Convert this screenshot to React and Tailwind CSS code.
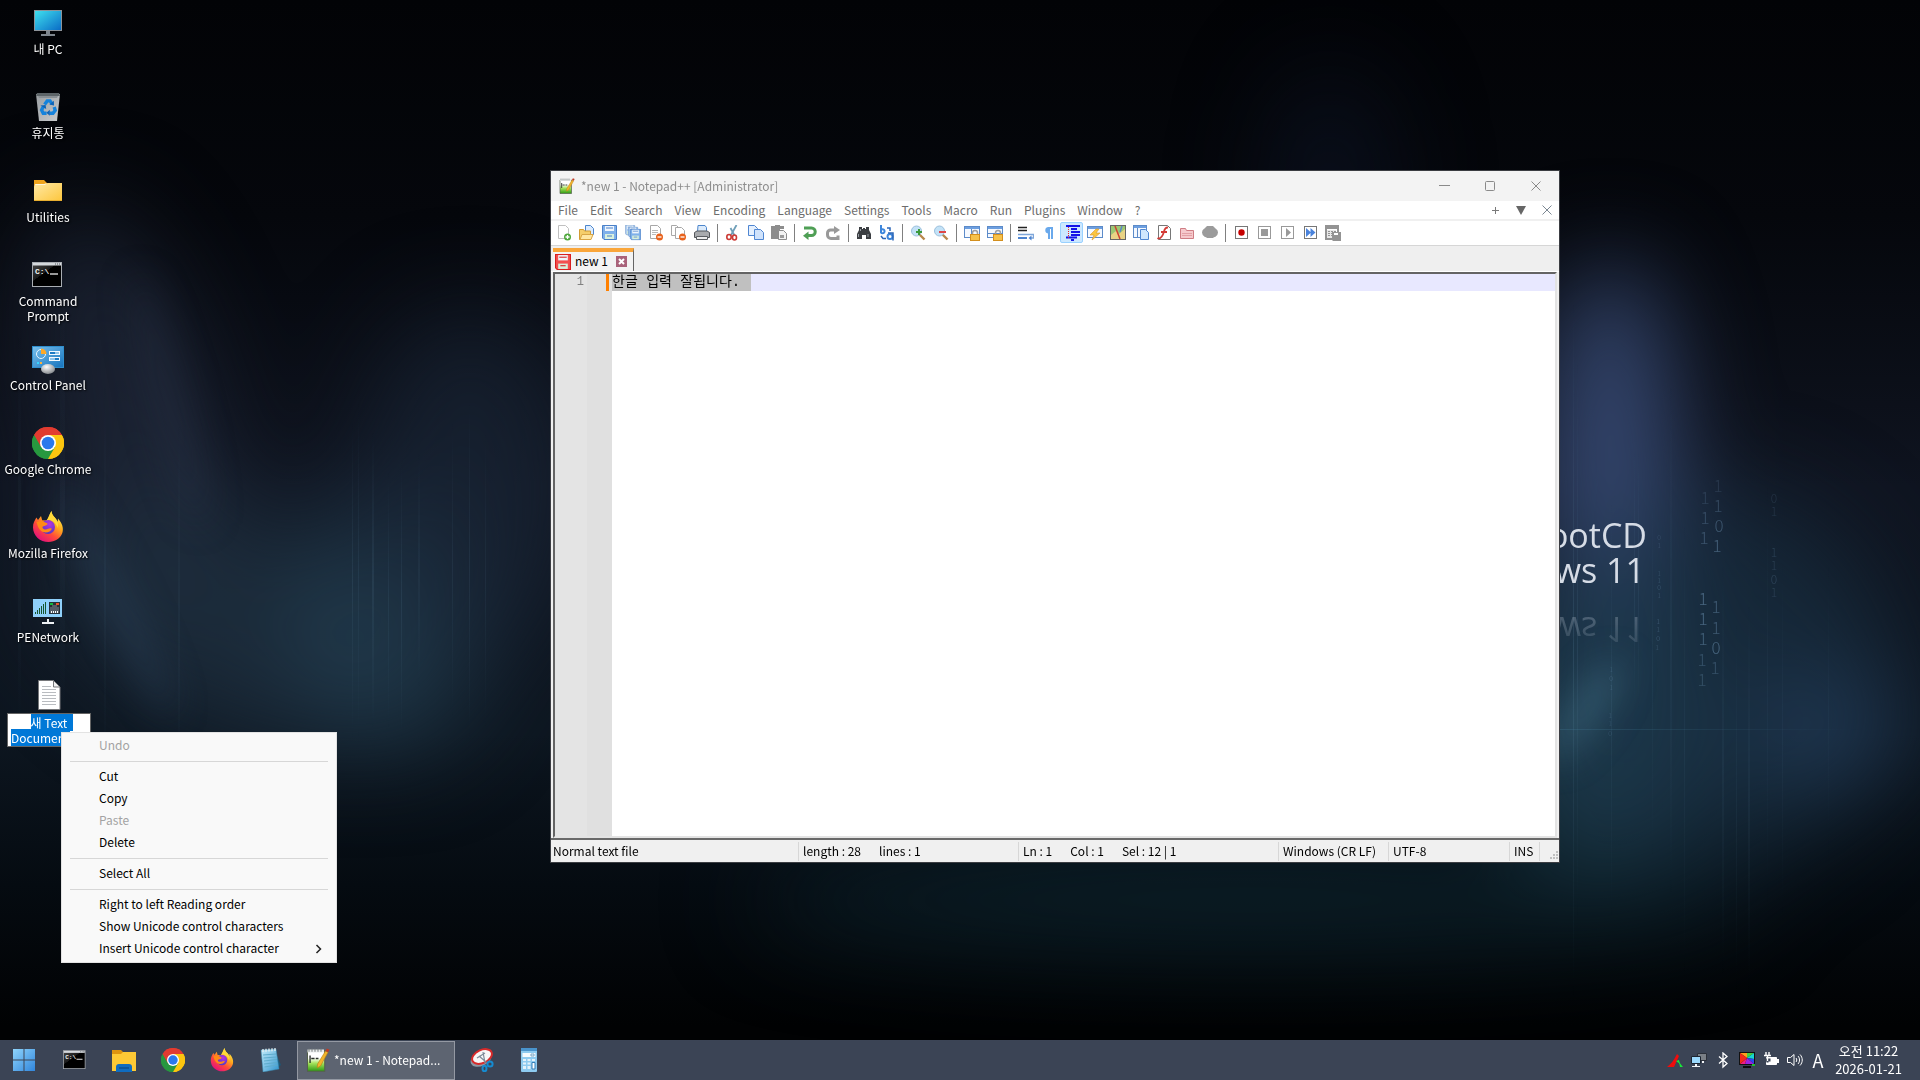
import { useEffect, useRef } from "react";

/* ---------- wallpaper ---------- */

const STREAKS = [
  [18, 330, 420, 0.05, 3], [60, 250, 520, 0.04, 5], [104, 380, 420, 0.05, 2], [178, 420, 380, 0.05, 2],
  [352, 420, 320, 0.1, 1], [358, 400, 340, 0.08, 1], [372, 430, 300, 0.1, 2], [388, 470, 260, 0.08, 1],
  [401, 460, 280, 0.1, 1], [418, 450, 240, 0.06, 2], [452, 420, 300, 0.08, 1], [469, 400, 340, 0.09, 1],
  [485, 430, 300, 0.07, 1], [1573, 300, 700, 0.14, 1], [1577, 360, 560, 0.1, 1], [1611, 500, 420, 0.08, 1],
  [1634, 450, 260, 0.09, 1], [1638, 450, 260, 0.08, 1], [1652, 480, 380, 0.06, 1], [1670, 380, 520, 0.06, 2],
  [1684, 520, 460, 0.06, 1], [1722, 560, 420, 0.06, 2], [1736, 620, 380, 0.06, 1], [1748, 600, 400, 0.06, 2],
  [1767, 480, 430, 0.05, 1], [1782, 560, 360, 0.05, 1], [1828, 560, 300, 0.04, 1],
];

const DIGITS = [
  [1705, 504, "1", 17, 0.16], [1705, 524, "1", 17, 0.24], [1704, 544, "1", 17, 0.28],
  [1718, 492, "1", 17, 0.14], [1718, 512, "1", 17, 0.24], [1719, 532, "0", 17, 0.3], [1717, 552, "1", 17, 0.36],
  [1703, 605, "1", 17, 0.4], [1703, 625, "1", 17, 0.38], [1703, 645, "1", 17, 0.34], [1702, 666, "1", 17, 0.24], [1702, 686, "1", 17, 0.22],
  [1716, 613, "1", 17, 0.32], [1716, 634, "1", 17, 0.3], [1716, 654, "0", 17, 0.36], [1715, 674, "1", 17, 0.24],
  [1774, 503, "0", 12, 0.14], [1774, 516, "1", 12, 0.14], [1774, 557, "1", 12, 0.18], [1774, 570, "1", 12, 0.16],
  [1774, 584, "0", 12, 0.2], [1774, 597, "1", 12, 0.16],
  [1659, 540, "0", 7, 0.2], [1659, 548, "1", 7, 0.2], [1659, 576, "1", 7, 0.2], [1659, 583, "1", 7, 0.22], [1659, 590, "0", 7, 0.26], [1659, 598, "1", 7, 0.24],
  [1658, 624, "1", 7, 0.3], [1658, 632, "1", 7, 0.26], [1658, 641, "0", 7, 0.3], [1657, 650, "1", 7, 0.24],
  [1611, 672, "1", 7, 0.2], [1611, 681, "0", 7, 0.24], [1611, 690, "1", 7, 0.2], [1610, 718, "1", 7, 0.2], [1610, 726, "1", 7, 0.16], [1610, 736, "0", 7, 0.2],
];

function Wallpaper() {
  return (
    <svg className="absolute inset-0 h-full w-full" viewBox="0 0 1920 1080" preserveAspectRatio="xMidYMid slice" aria-hidden="true">
      <defs>
        <linearGradient id="wpBase" x1="0" y1="0" x2="0" y2="1">
          <stop offset="0" stopColor="#020306" />
          <stop offset="0.2" stopColor="#05070c" />
          <stop offset="0.45" stopColor="#0f1420" />
          <stop offset="0.68" stopColor="#0d1620" />
          <stop offset="0.82" stopColor="#050b11" />
          <stop offset="0.95" stopColor="#010203" />
        </linearGradient>
        <linearGradient id="wpReflect" x1="0" y1="0" x2="0" y2="1">
          <stop offset="0" stopColor="#c9d4e2" stopOpacity="0.1" />
          <stop offset="1" stopColor="#c9d4e2" stopOpacity="0.32" />
        </linearGradient>
        <linearGradient id="wpStreak" x1="0" y1="0" x2="0" y2="1">
          <stop offset="0" stopColor="#7fb0d0" stopOpacity="0" />
          <stop offset="0.5" stopColor="#7fb0d0" />
          <stop offset="1" stopColor="#7fb0d0" stopOpacity="0" />
        </linearGradient>
        <linearGradient id="wpHorizon" x1="0" y1="0" x2="1" y2="0">
          <stop offset="0" stopColor="#3f7590" stopOpacity="0.35" />
          <stop offset="1" stopColor="#3f7590" stopOpacity="0" />
        </linearGradient>
        <filter id="wpBlur" x="-20%" y="-20%" width="140%" height="140%" colorInterpolationFilters="sRGB"><feGaussianBlur stdDeviation="48" /></filter>
        <filter id="wpSoft" x="-20%" y="-20%" width="140%" height="140%" colorInterpolationFilters="sRGB"><feGaussianBlur stdDeviation="18" /></filter>
      </defs>
      <rect width="1920" height="1080" fill="url(#wpBase)" />
      <g filter="url(#wpBlur)">
        <ellipse cx="130" cy="420" rx="80" ry="220" fill="#222b3d" opacity="0.7" transform="rotate(-16 130 420)" />
        <ellipse cx="230" cy="620" rx="190" ry="110" fill="#1f3040" opacity="0.75" transform="rotate(24 230 620)" />
        <ellipse cx="390" cy="620" rx="100" ry="130" fill="#234052" opacity="0.7" />
        <ellipse cx="470" cy="480" rx="110" ry="170" fill="#1a2638" opacity="0.65" />
        <ellipse cx="1610" cy="470" rx="65" ry="210" fill="#3b4f7b" opacity="0.9" />
        <ellipse cx="1330" cy="180" rx="60" ry="110" fill="#0d1628" opacity="0.6" />
        <ellipse cx="1600" cy="720" rx="110" ry="150" fill="#214658" opacity="0.75" />
        <ellipse cx="1720" cy="680" rx="170" ry="190" fill="#1b3448" opacity="0.6" />
        <ellipse cx="1830" cy="730" rx="80" ry="50" fill="#2c4c74" opacity="0.5" />
        <ellipse cx="1250" cy="900" rx="500" ry="50" fill="#0e2832" opacity="0.7" />
      </g>
      <g filter="url(#wpSoft)">
        <ellipse cx="115" cy="600" rx="14" ry="130" fill="#3f5d7d" opacity="0.3" transform="rotate(-26 115 600)" />
        <ellipse cx="170" cy="400" rx="18" ry="130" fill="#3a4866" opacity="0.22" transform="rotate(-14 170 400)" />
        <ellipse cx="1585" cy="710" rx="16" ry="60" fill="#5b95b0" opacity="0.35" transform="rotate(35 1585 710)" />
      </g>
      {STREAKS.map(([x, y, h, o, w]) => (
        <rect key={x} x={x} y={y} width={w} height={h} fill="url(#wpStreak)" opacity={o} />
      ))}
      <rect x="1540" y="729" width="320" height="1" fill="url(#wpHorizon)" />
      <g fontFamily="'Noto Sans CJK KR', sans-serif" fontWeight="300" fill="#8fbbe0">
        {DIGITS.map(([x, y, d, s, o]) => (
          <text key={`${x}-${y}`} x={x} y={y} fontSize={s} opacity={o} textAnchor="middle">{d}</text>
        ))}
      </g>
      <g fontFamily="'Open Sans', 'Noto Sans', sans-serif" textAnchor="end" fontSize="34">
        <text x="1647" y="548" fill="#d6dce6">BootCD</text>
        <text x="1645" y="583" fill="#d6dce6">Windows 11</text>
        <text x="1645" y="0" fill="url(#wpReflect)" transform="translate(0 617) scale(1 -1)">Windows 11</text>
      </g>
    </svg>
  );
}

/* ---------- large icons ---------- */

const PcIcon = () => (
  <svg width="32" height="32" viewBox="0 0 32 32" aria-hidden="true">
    <defs><linearGradient id="pcg" x1="0" y1="0" x2="1" y2="1"><stop stopColor="#3fe0ee" /><stop offset="1" stopColor="#0a6cc6" /></linearGradient></defs>
    <rect x="2" y="3" width="28" height="21" fill="#8d9399" /><rect x="3" y="4" width="26" height="19" fill="url(#pcg)" />
    <path d="M14 24h4v3h5v2H9v-2h5z" fill="#7e868e" />
  </svg>
);
const BinIcon = () => (
  <svg width="32" height="32" viewBox="0 0 32 32" aria-hidden="true">
    <defs><linearGradient id="bing" x1="0" y1="0" x2="1" y2="1"><stop stopColor="#9a9ea2" /><stop offset="1" stopColor="#c9ccce" /></linearGradient></defs>
    <path d="M4 3h24l-3 27H7z" fill="url(#bing)" /><path d="M5 2h22l1 3H4z" fill="#5d6468" /><path d="M6 5h20l-1 2H7z" fill="#8a9095" />
    <g fill="none" stroke="#1583dc" strokeWidth="3.4"><path d="M12.600 13.500l2.600-3.600h2.800l2 3" /><path d="M22.200 16l1 3.400-2.200 2.800h-3.400" /><path d="M14.600 22.200h-3.400L9.600 19l1.800-3.600" /></g>
    <path d="M21.800 9.800l.2 4.800-4.600-1zM17.800 18.800v6l-3.400-3zM8.400 14.600l5.200-.6.6 4z" fill="#0d64b8" />
  </svg>
);
const FolderIcon = () => (
  <svg width="32" height="32" viewBox="0 0 32 32" aria-hidden="true">
    <defs><linearGradient id="fog" x1="0" y1="0" x2="1" y2="1"><stop stopColor="#ffe9a6" /><stop offset="1" stopColor="#fdc63c" /></linearGradient></defs>
    <path d="M2 5h10l3 3h15v4H2z" fill="#f0a41d" /><path d="M2 12l1-3h10l3-1h14v18H2z" fill="url(#fog)" /><path d="M3 9h9l3-1-2 2H4z" fill="#fff6d8" /><path d="M2 25h28v1H2z" fill="#e8ae30" />
  </svg>
);
const CmdIcon = ({ size = 32 }) => (
  <svg width={size} height={size} viewBox="0 0 32 32" aria-hidden="true">
    <defs><linearGradient id="cmg" x1="0" y1="0" x2=".7" y2=".8"><stop stopColor="#4a4a4a" /><stop offset=".55" stopColor="#1a1a1a" /><stop offset=".56" stopColor="#000" /></linearGradient></defs>
    <rect x="0.5" y="3.500" width="29" height="24" fill="url(#cmg)" stroke="#a9adb2" /><rect x="1" y="4" width="28" height="2.500" fill="#d5d9dd" />
    <path d="M23 5h1M25 5h1M27 5h1" stroke="#555b61" />
    <text x="3" y="15" fontFamily="'Liberation Mono', monospace" fontSize="8" fontWeight="700" fill="#f4f4f4">C:\</text><path d="M18 15h8" stroke="#fff" strokeWidth="1.200" />
  </svg>
);
const ControlIcon = () => (
  <svg width="32" height="32" viewBox="0 0 32 32" aria-hidden="true">
    <defs><linearGradient id="cpg" x1="0" y1="0" x2="1" y2="1"><stop stopColor="#79c1ee" /><stop offset="1" stopColor="#1673bd" /></linearGradient><radialGradient id="cpb" cx=".4" cy=".3" r=".7"><stop stopColor="#fff" /><stop offset="1" stopColor="#878b8f" /></radialGradient></defs>
    <rect x=".5" y="3.500" width="31" height="21" fill="url(#cpg)" stroke="#2f8fce" />
    <circle cx="9" cy="11" r="4.500" fill="none" stroke="#e9f6ff" strokeWidth="1" /><path d="M9 11V5.500A5.500 5.500 0 0 1 14.500 11z" fill="#ffa927" />
    <path d="M17 8h11v4H17zM17 14h11v4H17z" fill="#f3faff" /><path d="M18 9h9v2h-9zM18 15h9v2h-9z" fill="#1c7bc4" /><path d="M23 9h4v2h-4zM18 15h5v2h-5z" fill="#8fc4ea" /><path d="M5 19h2v2H5z" fill="#37d6ff" /><path d="M8 19h2v2H8z" fill="#ffb23b" />
    <ellipse cx="16" cy="26" rx="7" ry="5" fill="url(#cpb)" />
  </svg>
);
const ChromeIcon = ({ size = 32 }) => (
  <svg width={size} height={size} viewBox="0 0 32 32" aria-hidden="true">
    <path d="M16 16L2.140 8A16 16 0 0 1 29.860 8z" fill="#e23b30" /><path d="M16 16L29.860 8A16 16 0 0 1 16 32z" fill="#fcc50f" /><path d="M16 16v16A16 16 0 0 1 2.140 8z" fill="#27983f" />
    <path d="M16 8h13.860A16 16 0 0 1 16 32l6.930-12z" fill="#fcc50f" /><path d="M22.930 20L16 32A16 16 0 0 1 2.140 8l6.930 12z" fill="#27983f" /><path d="M9.070 20L2.140 8A16 16 0 0 1 29.860 8H16z" fill="#e23b30" />
    <circle cx="16" cy="16" r="8" fill="#fff" /><circle cx="16" cy="16" r="6.300" fill="#2a78ec" />
  </svg>
);
const FirefoxIcon = ({ size = 32 }) => (
  <svg width={size} height={size} viewBox="0 0 32 32" aria-hidden="true">
    <defs>
      <linearGradient id="ffg" x1=".85" y1=".1" x2=".25" y2=".95"><stop stopColor="#fff14f" /><stop offset=".35" stopColor="#ffab1d" /><stop offset=".65" stopColor="#ff4a3a" /><stop offset="1" stopColor="#e5127b" /></linearGradient>
      <radialGradient id="ffp" cx=".6" cy=".3" r=".75"><stop stopColor="#b833e1" /><stop offset="1" stopColor="#493ac4" /></radialGradient>
    </defs>
    <path d="M19.500 0c.2 3 1.500 4.700 3.500 6.800 1.500 1.600 2.300 2.800 2.700 4.200l.3-3.500c4 4.500 6 9.500 4.300 14.500C28.300 27.500 23 31 16.500 31 8 31 1.200 25 1 16.500.9 12 3 8.800 4.400 6.500L6 9l3-4 1.200 4.200 4.300.2c2.300-2.600 2.500-5.400 5-9.400z" fill="url(#ffg)" />
    <circle cx="16" cy="16" r="7" fill="url(#ffp)" />
    <path d="M4.500 11l4.700-1.200 6 2.500c1 .9-.2 2.200-3.700 2.900-1.800.4-1 2.700 1.300 3.200 2.800.6 4.200-1.900 7-.7-1 3.300-6.700 5.200-10.500 2.300-3-2.200-3.800-5.500-4.800-9z" fill="#ff8a16" />
    <path d="M19.500 0c.2 3 1.500 4.700 3.500 6.800 3 3.200 3.700 6.600 2.500 10.200-.7-3-2.500-6.200-6-7.600-2-.9-3.300-.7-5 0C16.800 6.800 17 4 19.500 0z" fill="#ffd93a" />
  </svg>
);
const NetIcon = () => (
  <svg width="32" height="32" viewBox="0 0 32 32" aria-hidden="true">
    <rect x="1" y="4" width="29" height="18" fill="#8fd0fa" /><g fill="#15562e"><path d="M3 17h1v2H3zM5 15h1v4H5zM7 13h1v6H7zM9 11h1v8H9zM11 9h1v10h-1zM13 7h1v12h-1z" /></g>
    <path d="M17 7h11v12H17z" fill="#263039" /><path d="M18 8h3v2h-3z" fill="#12b93c" /><path d="M24 8h3v2h-3z" fill="#e8522a" /><path d="M20 10h5v2h2v6h-9v-6h2z" fill="#535c66" /><path d="M19 16h1v2h-1zM21 16h1v2h-1zM23 16h1v2h-1zM25 16h1v2h-1z" fill="#fff" />
    <path d="M15 24h2v3h5v2H10v-2h5z" fill="#eef1f4" />
  </svg>
);
const DocIcon = () => (
  <svg width="32" height="32" viewBox="0 0 32 32" aria-hidden="true">
    <path d="M5.500 1.500H20.500l6.500 6.500v22.500H5.500z" fill="#fff" stroke="#76777a" /><path d="M20.500 1.500v6.500H27z" fill="#f0f0f0" stroke="#76777a" />
    <path d="M9 7.500h9M9 10.500h14M9 13.500h14M9 16.500h14M9 19.500h14M9 22.500h14M9 25.500h14" stroke="#b9bcc0" />
  </svg>
);

/* Notepad++ mark, shared by the title bar and the taskbar */
const NppIcon = ({ size = 16 }) => (
  <svg width={size} height={size} viewBox="0 0 16 16" aria-hidden="true">
    <defs><linearGradient id="npg" x1="0" y1="0" x2="0" y2="1"><stop offset=".35" stopColor="#fff" /><stop offset=".6" stopColor="#a6e45c" /><stop offset="1" stopColor="#2f9a12" /></linearGradient></defs>
    <path d="M1 2h11.500v13.500H1z" fill="url(#npg)" stroke="#55604c" strokeWidth=".7" /><path d="M1 1h11v2H1z" fill="#e9ecec" /><path d="M2 .5v2M4 .5v2M6 .5v2M8 .5v2M10 .5v2" stroke="#7c8182" strokeWidth=".7" />
    <path d="M2.700 5v5M3.500 7h2.200M6.500 7h1.800" stroke="#2a2f2a" strokeWidth=".9" /><path d="M13 2l1.700.8-5 9.200-2.200 1.200.2-2.500z" fill="#f1b42b" stroke="#b57c16" strokeWidth=".4" /><path d="M13 2l.9-1.700 1.800.8-1 1.700z" fill="#c03a24" />
  </svg>
);

/* ---------- toolbar glyphs ---------- */

const Page = ({ x = 2, y = 0, w = 11, h = 14, c = "#a8a8a8", f = "#fff" }) => (
  <path d={`M${x + 0.5} ${y + 0.5}h${w - 4}l3 3v${h - 4}h${-(w - 1)}z`} fill={f} stroke={c} />
);
const Pane = ({ children }) => (
  <>
    <rect x=".5" y="1.500" width="15" height="11" fill="#f5f9ff" stroke="#5c8bc9" /><path d="M1 2h14v2H1z" fill="#6d9fe0" />{children}
  </>
);
const Lock = () => (
  <><path d="M8.500 10V8a2.500 2.500 0 0 1 5 0v2" fill="none" stroke="#a0a0a0" strokeWidth="1.500" /><rect x="6.500" y="9.500" width="9" height="6" fill="#f7c24a" stroke="#d38f1e" /></>
);
const Badge = ({ c, plus }) => (
  <><circle cx="11.500" cy="12" r="3.500" fill={c} /><path d={plus ? "M9.500 12h4M11.500 10v4" : "M9.500 12h4"} stroke="#fff" strokeWidth="1.300" /></>
);
const Floppy = ({ x = 0, y = 0, s = 15, c = "#4a80c8", f = "#7fb0ea" }) => (
  <g transform={`translate(${x} ${y}) scale(${s / 15})`}>
    <path d="M.5.5h14v14H2l-1.500-1.500z" fill={f} stroke={c} /><path d="M3 1h9v5H3z" fill="#eef5fd" /><path d="M4 3h7" stroke={c} /><path d="M3 9h9v5H3z" fill="#d9f0dd" /><path d="M5 11h5" stroke={c} />
  </g>
);
const Lens = ({ mark, c }) => (
  <><path d="M9.500 9.500l5 5" stroke="#b8874b" strokeWidth="2.400" /><circle cx="6.500" cy="6" r="5" fill="#c3e2f7" stroke="#9cc0dc" /><path d={mark} stroke={c} strokeWidth="2" /></>
);
const Box = ({ children, c = "#777" }) => (<><rect x="2.500" y="1.500" width="12" height="12" fill="#fff" stroke={c} />{children}</>);

const TOOLS = [
  ["New", <><Page c="#c0c0c0" /><Badge c="#4fa83d" plus /></>],
  ["Open", <><Page x={6} w={9} h={10} c="#4d86cc" f="#dcecff" /><path d="M.5 14.500v-10h4l1 1.500h6v8.500z" fill="#f5ce6b" stroke="#d39b33" /><path d="M1 14.500l2-5h11l-2 5z" fill="#ffe7a3" stroke="#d9a544" /></>],
  ["Save", <Floppy />],
  ["Save All", <><Floppy x={0} y={0} s={10} c="#7aa0cf" f="#b4d0f1" /><Floppy x={3} y={2} s={10} c="#6a96cf" f="#a0c5ef" /><Floppy x={5} y={4} s={11} /></>],
  ["Close", <><Page /><path d="M4 5.500h6M4 7.500h6M4 9.500h4" stroke="#b9b9b9" /><Badge c="#e8621c" /></>],
  ["Close All", <><Page x={0} w={9} h={11} /><Page x={4} y={2} w={10} h={12} /><Badge c="#e8621c" /></>],
  ["Print", <><path d="M4 .5h7l1.500 2V7h-9z" fill="#dcebfb" stroke="#4d86cc" /><path d="M.5 7.500L3 6h10l2.500 1.500v5H.5z" fill="#a9abae" stroke="#55585c" /><path d="M2.500 11.500h11v3h-11z" fill="#eee" stroke="#5b5e62" /></>],
  null,
  ["Cut", <><path d="M11.500 0L6 10M5.500 3l4 7.500" stroke="#6f9fb8" strokeWidth="1.800" /><ellipse cx="4" cy="12" rx="2.200" ry="2.500" fill="none" stroke="#cc3a35" strokeWidth="1.600" /><ellipse cx="9.500" cy="12.500" rx="2" ry="2.500" fill="none" stroke="#cc3a35" strokeWidth="1.600" /></>],
  ["Copy", <><Page x={0} w={10} h={11} c="#4f86d2" f="#e5f0fe" /><Page x={6} y={4} w={10} h={11} c="#4f86d2" f="#cfe2fb" /></>],
  ["Paste", <><path d="M0 1h4V0h5v1h4v3H9v10H0z" fill="#8d8d8d" /><Page x={7} y={5} w={9} h={10} c="#8d8d8d" f="#f2f2f2" /><path d="M9 10h4v3H9z" fill="#9b9b9b" /></>],
  null,
  ["Undo", <><path d="M2 3h7.500a3.700 3.700 0 0 1 0 7.500H5" fill="none" stroke="#4f9f55" strokeWidth="3" /><path d="M6.500 6.500v8.500L1 10.800z" fill="#4f9f55" /></>],
  ["Redo", <><path d="M13 10.500v3H6a3.500 3.500 0 0 1-3.500-3.500V8A3 3 0 0 1 5.500 5H10" fill="none" stroke="#999" strokeWidth="3" /><path d="M9 1v8l6-4z" fill="#999" /></>],
  null,
  ["Find", <><path d="M3 2h3v2h1V3h2v1h1V2h3v3l2 4v5h-5v-4H6v4H1V9l2-4z" fill="#3b3e42" /><path d="M2.500 9v3M12 9v3M4.500 4v2" stroke="#9a9fa6" /></>],
  ["Replace", <><path d="M2 0v8M2 5a2 2 0 1 1 0 2.500" fill="none" stroke="#3d86dc" strokeWidth="2" /><circle cx="11" cy="11.500" r="2.500" fill="none" stroke="#3d86dc" strokeWidth="2" /><path d="M9 8h5v7.500M8 3h3v3M2 11l2 2.500h3" fill="none" stroke="#2b66b8" strokeWidth="1.500" /></>],
  null,
  ["Zoom In", <Lens mark="M6 7h6M9 4v6" c="#3d9a3d" />],
  ["Zoom Out", <Lens mark="M6 7h7" c="#e04848" />],
  null,
  ["Synchronize Vertical Scrolling", <Pane><path d="M7.500 4v9" stroke="#5c8bc9" /><Lock /></Pane>],
  ["Synchronize Horizontal Scrolling", <Pane><path d="M1 8.500h14" stroke="#5c8bc9" /><Lock /></Pane>],
  null,
  ["Word Wrap", <><path d="M0 2.500h9M0 5.500h9" stroke="#222" strokeWidth="1.400" /><path d="M0 9.500h15.500v3.500H12" fill="none" stroke="#7ea6da" strokeWidth="1.400" /><path d="M0 13h9" stroke="#4c83cf" strokeWidth="2" /><path d="M13.500 10.500v5L10.500 13z" fill="#4c83cf" /></>],
  ["Show All Characters", <path d="M12 2v12h-2V4H9v10H7V8.500A3.300 3.300 0 0 1 7 2z" fill="#6aa9ec" />],
  ["Show Indent Guide", <><path d="M2 1h14M7 4h6M7 7h9M7 10h9M2 12.500h11M7 15h3" stroke="#1414e8" strokeWidth="1.800" /><path d="M4.500 2v12" stroke="#e22" strokeDasharray="1 1" /></>, true],
  ["Define Language", <Pane><path d="M9 4l-6 6h4l-2 5 8-7H9l3-4z" fill="#fbc63f" stroke="#d9932b" strokeWidth=".6" /></Pane>],
  ["Document Map", <><rect x=".5" y=".5" width="15" height="14" fill="#9cc873" stroke="#666" /><path d="M1 10l5-4 3 3 6-5v10H1z" fill="#e9d385" /><path d="M5 1l5 13" stroke="#cc4130" strokeWidth="1.500" /><path d="M12 1l-2 6" stroke="#5b86c9" strokeWidth="1.500" /></>],
  ["Document List", <><rect x=".5" y=".5" width="13" height="12" fill="#f3f8ff" stroke="#5c8bc9" /><path d="M1 1h12v2H1z" fill="#6d9fe0" /><path d="M4.500 3v9" stroke="#5c8bc9" /><Page x={7} y={4} w={9} h={11} c="#4f86d2" f="#cfe6fd" /></>],
  ["Function List", <><Page x={2} w={13} h={15} c="#777" /><path d="M12 2.500C8 2 8.500 6 7 9.500S3 14 1.500 13M5 7h6" fill="none" stroke="#d33a35" strokeWidth="1.800" /></>],
  ["Folder as Workspace", <><path d="M1.500 13.500V3.500h5l1 2h7v8z" fill="#f6c9cc" stroke="#cf7d84" /><path d="M3 8.500h10M3 10.500h10" stroke="#e3a1a6" /></>],
  ["Monitoring", <><ellipse cx="8" cy="7.500" rx="8" ry="5.500" fill="#9b9b9b" /><path d="M3 3l2-2h6l2 2-2 10H5z" fill="#9b9b9b" /></>],
  null,
  ["Record Macro", <Box><circle cx="8.500" cy="7.500" r="3.200" fill="#c60000" /></Box>],
  ["Stop Recording", <Box c="#999"><path d="M5 4h7v7H5z" fill="#999" /></Box>],
  ["Playback", <Box c="#999"><path d="M7 3l5 4.500L7 12z" fill="#999" /></Box>],
  ["Run Macro Multiple Times", <Box><path d="M4 3l5 4.500L4 12zM8.500 3l5 4.500-5 4.500z" fill="#4a83dc" /></Box>],
  ["Save Recorded Macro", <><path d="M0 0h14v7h-2V4H2v9h5v2H0z" fill="#939393" /><path d="M2 5h9v8H2z" fill="#e8e8e8" /><path d="M3 6.500h8M3 8.500h5M3 10.500h4" stroke="#939393" strokeDasharray="2 1" /><path d="M7 7h9v9H8l-1-1z" fill="#939393" /><path d="M9 8h4v2H9z" fill="#fff" /></>],
];

/* ---------- desktop ---------- */

const SHORTCUTS = [
  ["내 PC", <PcIcon />], ["휴지통", <BinIcon />], ["Utilities", <FolderIcon />], ["Command Prompt", <CmdIcon />],
  ["Control Panel", <ControlIcon />], ["Google Chrome", <ChromeIcon />], ["Mozilla Firefox", <FirefoxIcon />], ["PENetwork", <NetIcon />],
];

function DesktopIcons() {
  const rename = useRef(null);
  useEffect(() => {
    rename.current.focus();
    rename.current.setSelectionRange(0, rename.current.value.lastIndexOf("."));
  }, []);
  return (
    <div className="relative flex w-24 flex-col pt-[7px]">
      {SHORTCUTS.map(([label, icon]) => (
        <button key={label} type="button" className="flex h-[84px] flex-col items-center gap-[2px] text-white">
          {icon}
          <span className="w-[92px] text-center leading-[15px] [text-shadow:1px_1px_2px_#000]">{label}</span>
        </button>
      ))}
      <div className="flex h-[84px] flex-col items-center gap-[2px] pl-[2px]">
        <DocIcon />
        <textarea
          ref={rename}
          aria-label="File name"
          rows={2}
          spellCheck={false}
          defaultValue="새 Text Document.txt"
          className="block h-[34px] w-[84px] resize-none overflow-hidden border border-[#646464] bg-white p-px text-center leading-[15px] outline-none selection:bg-[#0078d7] selection:text-white"
        />
      </div>
    </div>
  );
}

const MENU = [
  ["Undo", true], null, ["Cut"], ["Copy"], ["Paste", true], ["Delete"], null, ["Select All"], null,
  ["Right to left Reading order"], ["Show Unicode control characters"], ["Insert Unicode control character", false, true],
];

function ContextMenu() {
  return (
    <div role="menu" className="absolute left-[61px] top-[732px] z-20 w-[276px] border border-[#e3e3e3] bg-[#f9f9f9] py-[2px]">
      {MENU.map((m, i) =>
        m ? (
          <button key={m[0]} type="button" role="menuitem" disabled={m[1]} className="flex h-[22px] w-full items-center justify-between pl-[37px] pr-[14px] text-black disabled:text-[#a3a3a3]">
            <span className="pb-[3px]">{m[0]}</span>
            {m[2] && <svg width="7" height="10" viewBox="0 0 7 10" aria-hidden="true"><path d="M1.500 1l4 4-4 4" fill="none" stroke="#222" strokeWidth="1.500" /></svg>}
          </button>
        ) : (
          <div key={i} role="separator" className="mx-2 flex h-[9px] items-center"><div className="h-px w-full bg-[#d7d7d7]" /></div>
        )
      )}
    </div>
  );
}

/* ---------- editor window ---------- */

const MENUBAR = ["File", "Edit", "Search", "View", "Encoding", "Language", "Settings", "Tools", "Macro", "Run", "Plugins", "Window", "?"];

function Editor() {
  return (
    <main className="absolute bottom-[217px] left-[550px] right-[360px] top-[170px] z-10 flex flex-col border border-[#3b3d42] bg-[#f0f0f0]">
      <header className="flex h-[30px] shrink-0 items-center bg-[#f3f3f3] pl-2 text-[#8e8e8e]">
        <NppIcon />
        <h1 className="ml-[6px] flex-1 pb-[2px]">*new 1 - Notepad++ [Administrator]</h1>
        <button type="button" aria-label="Minimize" className="flex h-full w-[46px] items-center justify-center"><svg width="11" height="11"><path d="M0 4.500h11" stroke="#8a8a8a" /></svg></button>
        <button type="button" aria-label="Maximize" className="flex h-full w-[46px] items-center justify-center"><svg width="11" height="11"><rect x=".5" y=".5" width="9" height="9" rx="1" fill="none" stroke="#8a8a8a" /></svg></button>
        <button type="button" aria-label="Close" className="flex h-full w-[46px] items-center justify-center"><svg width="11" height="11"><path d="M.5.5l9 9M9.500.5l-9 9" stroke="#8a8a8a" /></svg></button>
      </header>

      <nav className="flex h-5 shrink-0 items-center border-b-2 border-[#f0f0f0] bg-white pl-px text-[#6d6d6d]">
        {MENUBAR.map((m) => <button key={m} type="button" className="px-[6px] pb-px">{m}</button>)}
        <span className="flex-1" />
        <button type="button" aria-label="New tab" className="flex w-6 justify-center"><svg width="7" height="7"><path d="M0 3.500h7M3.500 0v7" stroke="#7a7a7a" /></svg></button>
        <button type="button" aria-label="Tab list" className="flex w-[28px] justify-center"><svg width="10" height="9"><path d="M0 0h10L5 9z" fill="#666" /></svg></button>
        <button type="button" aria-label="Close tab" className="flex w-6 justify-center"><svg width="10" height="10"><path d="M.5.5l9 9M9.500.5l-9 9" stroke="#7b8792" /></svg></button>
      </nav>

      <div className="flex h-[25px] shrink-0 items-center border-b border-[#d6d6d6] bg-white pb-px pl-px" role="toolbar">
        {TOOLS.map((t, i) =>
          t ? (
            <button key={t[0]} type="button" aria-label={t[0]} aria-pressed={!!t[2]} className="flex h-[21px] w-[23px] items-center justify-center rounded-[2px] border border-transparent aria-pressed:border-[#99d1ff] aria-pressed:bg-[#cce8ff]">
              <svg width="16" height="16" viewBox="0 0 16 16" fill="none" aria-hidden="true">{t[1]}</svg>
            </button>
          ) : (
            <div key={i} className="flex w-2 justify-center"><div className="h-[18px] w-px bg-[#808080]" /></div>
          )
        )}
      </div>

      <div className="flex h-[26px] shrink-0 border-b border-white bg-[#efefef] pl-[2px] pt-[2px]" role="tablist">
        <div className="flex w-[81px] items-center border-r border-t-4 border-r-[#646464] border-t-[#faa63a] bg-[#f3f3f3] pl-[2px]">
          <svg width="16" height="16" viewBox="0 0 16 16" aria-hidden="true"><Floppy c="#d81f1f" f="#f45050" s={16} /></svg>
          <button type="button" role="tab" aria-selected="true" className="ml-1 flex-1 pb-[3px] text-left">new 1</button>
          <button type="button" aria-label="Close new 1" className="mr-[6px] flex h-[11px] w-[11px] items-center justify-center bg-[#a9627a]"><svg width="7" height="7"><path d="M1 1l5 5M6 1l-5 5" stroke="#fff" strokeWidth="2" /></svg></button>
        </div>
      </div>

      <section className="mx-[2px] flex min-h-0 flex-1 border-2 border-b-[#e3e3e3] border-l-[#646464] border-r-[#e3e3e3] border-t-[#646464] bg-white">
        <div className="flex w-8 bg-[#e4e4e4] font-['Liberation_Mono',monospace] text-[#808080]"><span className="w-full pr-[3px] text-right leading-[17px]">1</span></div>
        <div className="w-[25px] bg-[#e0e0e0]"><div className="ml-[19px] h-[17px] w-[3px] bg-[#ff8000]" /></div>
        <div className="relative flex-1">
          <div className="flex h-[17px] bg-[#e8e8ff]"><div className="w-[139px] bg-[#c0c0c0]" /></div>
          <textarea
            aria-label="Document text"
            spellCheck={false}
            defaultValue="한글 입력 잘됩니다."
            className="absolute inset-0 block h-full w-full resize-none bg-transparent font-['Liberation_Mono','Noto_Sans_CJK_KR',monospace] text-[14px] leading-[17px] text-black outline-none"
          />
        </div>
      </section>

      <footer className="flex h-[24px] shrink-0 items-center border-t-2 border-[#696969] text-black *:pb-[2px]">
        <span className="w-[247px] pl-[2px]">Normal text file</span>
        <span className="flex h-[19px] w-[220px] items-center gap-[18px] border-l border-[#d7d7d7] pl-1"><span>length : 28</span><span>lines : 1</span></span>
        <span className="flex h-[19px] w-[260px] items-center gap-[18px] border-l border-[#d7d7d7] pl-1"><span>Ln : 1</span><span>Col : 1</span><span>Sel : 12 | 1</span></span>
        <span className="flex h-[19px] w-[110px] items-center border-l border-[#d7d7d7] pl-1">Windows (CR LF)</span>
        <span className="flex h-[19px] flex-1 items-center border-l border-[#d7d7d7] pl-1">UTF-8</span>
        <span className="flex h-[19px] w-[30px] items-center border-l border-[#d7d7d7] pl-1">INS</span>
        <span className="flex h-[19px] w-[20px] items-end justify-end border-l border-[#d7d7d7] pr-px">
          <svg width="8" height="8" aria-hidden="true"><path d="M6 0h2v2H6zM3 3h2v2H3zM6 3h2v2H6zM0 6h2v2H0zM3 6h2v2H3zM6 6h2v2H6z" fill="#bfbfbf" /></svg>
        </span>
      </footer>
    </main>
  );
}

/* ---------- taskbar ---------- */

const StartIcon = () => (
  <svg width="22" height="22" viewBox="0 0 22 22" aria-hidden="true">
    <defs><linearGradient id="stg" x1="0" y1="0" x2="1" y2="1"><stop stopColor="#8fd4fb" /><stop offset="1" stopColor="#3186dc" /></linearGradient></defs>
    <path d="M0 0h10.500v10.500H0zM11.500 0H22v10.500H11.500zM0 11.500h10.500V22H0zM11.500 11.500H22V22H11.500z" fill="url(#stg)" />
  </svg>
);
const ExplorerIcon = () => (
  <svg width="24" height="24" viewBox="0 0 24 24" aria-hidden="true">
    <path d="M0 2h9l2 2h13v6H0z" fill="#dd9410" /><path d="M0 6h9l2-2h13v19H0z" fill="#fdc935" /><path d="M4 24v-5a3 3 0 0 1 3-3h10a3 3 0 0 1 3 3v5z" fill="#0f6cc0" /><path d="M7 20h10" stroke="#06407c" />
  </svg>
);
const NotepadIcon = () => (
  <svg width="24" height="24" viewBox="0 0 24 24" aria-hidden="true">
    <defs><linearGradient id="ntg" x1="0" y1="0" x2="1" y2="1"><stop stopColor="#c5edfb" /><stop offset="1" stopColor="#2f93cd" /></linearGradient></defs>
    <path d="M16 3l6 14-5 4z" fill="#1d5877" /><path d="M2 2l15-1 3 20-16 3z" fill="url(#ntg)" stroke="#3a86aa" strokeWidth=".5" /><path d="M4 7l13-1M4.500 10l13-1M5 13l13-1.500M5 16l13-1.500M5.500 19l13-2" stroke="#5eaccc" /><path d="M4 1v3M7 .7v3M10 .5v3M13 .3v3M16 0v3" stroke="#e9eef0" strokeWidth="1.300" />
  </svg>
);
const SnipIcon = () => (
  <svg width="24" height="24" viewBox="0 0 24 24" aria-hidden="true">
    <ellipse cx="11" cy="11" rx="11" ry="7" fill="#8b98a5" transform="rotate(-25 11 11)" /><ellipse cx="12" cy="8.500" rx="10.500" ry="6.500" fill="#f7f7f7" stroke="#d62a2a" strokeWidth="2" transform="rotate(-25 12 8.500)" />
    <path d="M7 10l8-5M13 4l2 11M9 8l7 6" stroke="#7c8b98" strokeWidth="1.200" /><circle cx="20" cy="16" r="2.600" fill="none" stroke="#168bd0" strokeWidth="2" /><ellipse cx="14.500" cy="20.500" rx="2" ry="2.800" fill="none" stroke="#168bd0" strokeWidth="2" />
  </svg>
);
const CalcIcon = () => (
  <svg width="24" height="24" viewBox="0 0 24 24" aria-hidden="true">
    <rect x="4" y="0" width="16" height="24" rx="1" fill="#8ecbf0" /><path d="M4 0h16v3H4z" fill="#4a94cc" /><path d="M5.500 5h13v4h-13z" fill="#f4fafe" /><path d="M14 6h3v2h-3z" fill="none" stroke="#7fa8c4" />
    <g fill="#e3f2fb"><path d="M6 11h3v2H6zM10.500 11h3v2h-3zM15 11h3v2h-3zM6 14.500h3v2H6zM10.500 14.500h3v2h-3zM6 18h3v3H6zM10.500 18h3v3h-3z" /></g><path d="M15 14.500h3V21h-3z" fill="#fff" stroke="#357fb8" />
  </svg>
);

const TRAY = [
  ["Activity", <><path d="M0 15C4 12 7 8 10 2l2 2-5 11z" fill="#f00c0c" /><path d="M12 10l4 5h-3z" fill="#17e83a" /><path d="M9 9l3-1 1 4z" fill="#17e83a" /></>],
  ["Network", <><path d="M6.500 1.500h9v7h-9z" fill="#7a7f86" stroke="#2b303a" /><path d="M.5 4.500h9v7h-9z" fill="#9ad8fc" stroke="#1c2430" /><path d="M4 12h2v2h3v1H1v-1h3zM11 9h2v2h-2z" fill="#f3f5f7" /></>],
  ["Bluetooth", <path d="M4 4.500l8 7L8 15V1l4 3.500-8 7" fill="none" stroke="#fff" strokeWidth="1.300" />],
  ["Display", <><path d="M0 0h16v13H0z" fill="#111" /><path d="M8 6L1 1h7z" fill="#ff9d1e" /><path d="M8 6V1h7z" fill="#46d03f" /><path d="M8 6l7-5v6z" fill="#17d5d2" /><path d="M8 6l7 1v5z" fill="#2a49ef" /><path d="M8 6l7 6H6z" fill="#9c23e0" /><path d="M8 6l-2 6H1z" fill="#f11d83" /><path d="M8 6l-7 6V1z" fill="#f32a1b" /><path d="M4 14h8v2H4z" fill="#0b0b0b" /><path d="M13 12h3v2h-3z" fill="#1fbf2d" /></>],
  ["Battery", <><path d="M3.500 5.500h10v7h-10z" fill="#fff" stroke="#fff" /><path d="M14 7h2v4h-2z" fill="#fff" /><path d="M1.500 6.500h6v3h-2v1h-2v-1h-2z" fill="#3b4455" /><path d="M3 0v3M6 0v3M1 3.500h7M4.500 4v5" stroke="#fff" strokeWidth="1.400" /></>],
  ["Volume", <><path d="M.5 5.500h3L7 2.500v11l-3.500-3h-3z" fill="none" stroke="#fff" /><path d="M9 6c1 1.200 1 2.800 0 4M11 4c2 2.200 2 5.800 0 8M13 2.500c3 3.200 3 7.800 0 11" fill="none" stroke="#fff" /></>],
];

function Taskbar() {
  const apps = [["Command Prompt", <CmdIcon size={24} />], ["File Explorer", <ExplorerIcon />], ["Google Chrome", <ChromeIcon size={24} />], ["Mozilla Firefox", <FirefoxIcon size={24} />], ["Notepad", <NotepadIcon />]];
  return (
    <footer className="relative flex h-10 shrink-0 items-center bg-[#3b4455] text-white">
      <button type="button" aria-label="Start" className="flex h-full w-[50px] items-center justify-center pr-[2px]"><StartIcon /></button>
      {apps.map(([n, icon]) => <button key={n} type="button" aria-label={n} className="flex h-full w-[49px] items-center justify-center">{icon}</button>)}
      <button type="button" className="mx-[2px] flex h-[39px] w-[158px] items-center gap-1 border border-[#9499a3] bg-[#5d6471] pl-2 text-left"><NppIcon size={24} /><span className="pb-[2px]">*new 1 - Notepad...</span></button>
      <button type="button" aria-label="Snipping Tool" className="flex h-full w-[49px] items-center justify-center"><SnipIcon /></button>
      <button type="button" aria-label="Calculator" className="flex h-full w-[46px] items-center justify-center"><CalcIcon /></button>
      <div className="ml-auto flex items-center">
        {TRAY.map(([n, g]) => <button key={n} type="button" aria-label={n} className="flex w-6 justify-center"><svg width="17" height="17" viewBox="0 0 17 17" aria-hidden="true">{g}</svg></button>)}
        <button type="button" aria-label="Input mode" className="w-[22px] pb-px text-center text-lg leading-5">A</button>
      </div>
      <time dateTime="2026-01-21T11:22" className="mr-[14px] flex w-[77px] flex-col items-center pb-px pl-[2px] text-[13px] leading-[18px]"><span>오전 11:22</span><span>2026-01-21</span></time>
    </footer>
  );
}

export default function App() {
  return (
    <div className="relative flex h-screen flex-col overflow-hidden bg-black font-['Noto_Sans_CJK_KR','Noto_Sans',sans-serif] text-[12px] leading-[15px]">
      <Wallpaper />
      <div className="relative min-h-0 flex-1"><DesktopIcons /></div>
      <Editor />
      <ContextMenu />
      <Taskbar />
    </div>
  );
}
